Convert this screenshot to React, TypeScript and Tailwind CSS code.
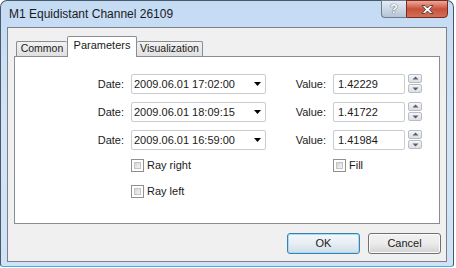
import React from "react";

const rows = [
  { date: "2009.06.01 17:02:00", value: "1.42229" },
  { date: "2009.06.01 18:09:15", value: "1.41722" },
  { date: "2009.06.01 16:59:00", value: "1.41984" },
];

const Check = ({ label }: { label: string }) => (
  <div className="flex items-center h-[13px]">
    <div className="w-[13px] h-[13px] border border-[#8f8f8f] bg-white p-[2px]">
      <div className="w-full h-full bg-gradient-to-br from-[#d5d5d5] to-[#f4f4f4] border border-[#c4c4c4]" />
    </div>
    <span className="ml-[3px] text-[#1a1a1a]">{label}</span>
  </div>
);

const Spinner = () => (
  <div className="ml-[3px] w-[14px] h-[20px] flex flex-col gap-[1px]">
    <div className="h-[9px] border border-[#b8bcc4] rounded-[2px] bg-gradient-to-b from-[#f6f6f6] to-[#dedede] flex items-center justify-center">
      <svg width="7" height="5" viewBox="0 0 7 5">
        <path d="M3.5 0.5 L6.5 3.5 L0.5 3.5 Z" fill="#4d5f7e" />
      </svg>
    </div>
    <div className="h-[9px] border border-[#b8bcc4] rounded-[2px] bg-gradient-to-b from-[#f6f6f6] to-[#dedede] flex items-center justify-center">
      <svg width="7" height="5" viewBox="0 0 7 5">
        <path d="M0.5 1.5 L6.5 1.5 L3.5 4.5 Z" fill="#4d5f7e" />
      </svg>
    </div>
  </div>
);

export default function App() {
  return (
    <div className="w-[456px] h-[268px] bg-white font-['Liberation_Sans',Arial,sans-serif] text-[11px] text-[#1a1a1a]">
      <div className="relative w-[454px] h-[267px] flex flex-col rounded-t-[7px] rounded-b-[3px] border border-[#4b5868] border-b-[#39b4e6] bg-gradient-to-b from-[#c4dbf4] via-[#d3e4f7] to-[#cfe2f6] px-[6px] pb-[4px]">
        {/* Title bar */}
        <div className="h-[26px] flex items-center pl-[2px] pb-[1px] text-[12px] text-[#1b1b1b]">
          M1 Equidistant Channel 26109
        </div>
        <div className="absolute top-[-1px] right-[5px] flex h-[18px]">
          <div className="w-[25px] h-full border border-[#6d7b8d] border-r-0 rounded-bl-[4px] bg-gradient-to-b from-[#e4ecf5] via-[#cdd8e5] to-[#b6c4d5] flex items-center justify-center">
            <span className="text-[13px] font-bold text-white [text-shadow:0_0_1px_#405066,0_0_1px_#405066]">?</span>
          </div>
          <div className="w-[42px] h-full border border-[#7a2a1e] rounded-br-[4px] bg-gradient-to-b from-[#e9a99b] via-[#c9503a] to-[#d0705a] flex items-center justify-center">
            <svg width="15" height="11" viewBox="0 0 15 11">
              <path d="M2 1.5 L5 1.5 L7.5 4 L10 1.5 L13 1.5 L9.5 5.5 L13 9.5 L10 9.5 L7.5 7 L5 9.5 L2 9.5 L5.5 5.5 Z" fill="#ffffff" stroke="#4a3a3a" strokeWidth="0.9" strokeLinejoin="round" />
            </svg>
          </div>
        </div>

        {/* Client area */}
        <div className="flex-1 flex flex-col border border-[#7d8087] bg-[#f0f0f0] px-[6px] pt-[7px]">
          {/* Tabs */}
          <div className="flex items-end h-[21px] pl-[2px] relative z-10 text-[10.5px]">
            <div className="w-[51px] h-[15px] flex items-center justify-center border border-[#898c95] border-b-0 border-r-0 rounded-t-[2px] bg-gradient-to-b from-[#f2f2f2] to-[#e0e0e0]">
              Common
            </div>
            <div className="w-[70px] h-[21px] pb-[3px] flex items-center justify-center border border-[#898c95] border-b-0 rounded-t-[2px] bg-white mb-[-1px] relative text-[11px]">
              Parameters
            </div>
            <div className="w-[66px] h-[15px] flex items-center justify-center border border-[#898c95] border-b-0 border-l-0 rounded-t-[2px] bg-gradient-to-b from-[#f2f2f2] to-[#e0e0e0]">
              Visualization
            </div>
          </div>

          {/* Panel */}
          <div className="h-[168px] border border-[#898c95] bg-white pt-[17px] flex flex-col">
            <div className="flex flex-col gap-[8px]">
              {rows.map((r) => (
                <div key={r.date} className="flex items-center h-[20px]">
                  <div className="w-[109px] text-right">Date:</div>
                  <div className="ml-[7px] w-[135px] h-[20px] border border-[#c9cbd0] rounded-[2px] bg-white flex items-center pl-[2px] pr-[4px]">
                    <span className="flex-1">{r.date}</span>
                    <svg width="7" height="4" viewBox="0 0 7 4">
                      <path d="M0 0 L7 0 L3.5 4 Z" fill="#000000" />
                    </svg>
                  </div>
                  <div className="w-[60px] text-right">Value:</div>
                  <div className="ml-[7px] w-[72px] h-[20px] border border-[#c9cbd0] rounded-[2px] bg-white flex items-center pl-[4px]">
                    {r.value}
                  </div>
                  <Spinner />
                </div>
              ))}
            </div>
            <div className="flex mt-[9px] pl-[116px]">
              <div className="w-[202px]">
                <Check label="Ray right" />
              </div>
              <Check label="Fill" />
            </div>
            <div className="flex mt-[13px] pl-[116px]">
              <Check label="Ray left" />
            </div>
          </div>

          {/* Buttons */}
          <div className="flex justify-end gap-[8px] mt-[9px] mr-[-1px]">
            <button className="w-[73px] h-[21px] rounded-[3px] border border-[#3c7fb1] bg-gradient-to-b from-[#f3f8fb] via-[#e8eef3] to-[#cfdde8] shadow-[inset_0_0_0_1px_#a6dcf5] text-[#1a1a1a]">
              OK
            </button>
            <button className="w-[73px] h-[21px] rounded-[3px] border border-[#707070] bg-gradient-to-b from-[#f2f2f2] via-[#ebebeb] to-[#d2d2d2] shadow-[inset_0_0_0_1px_#fbfbfb] text-[#1a1a1a]">
              Cancel
            </button>
          </div>
        </div>
      </div>
    </div>
  );
}
